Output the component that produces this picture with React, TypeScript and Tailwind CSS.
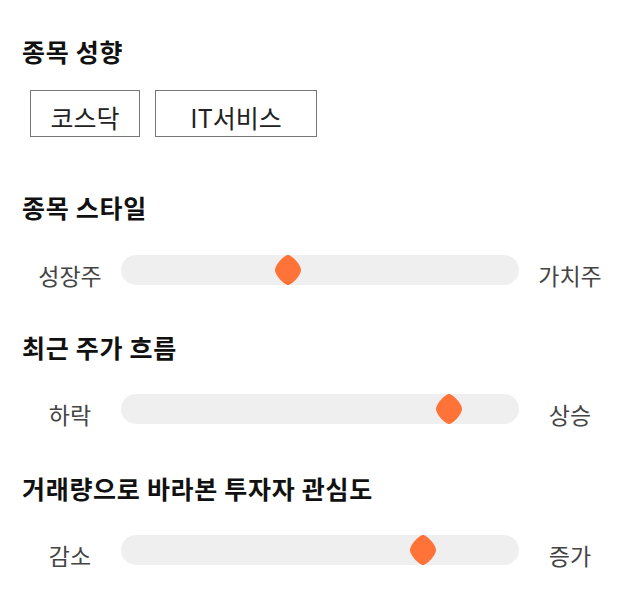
const FONT = "font-['Noto_Sans_CJK_KR','Noto_Sans',sans-serif]"

function Thumb({ pos }: { pos: number }) {
  return (
    <svg
      width="26"
      height="30"
      viewBox="0 0 26 30"
      className="absolute top-0"
      style={{ left: `calc(${pos * 100}% - 13px)` }}
    >
      <path d="M13 0C17 0 26 10 26 15C26 20 17 30 13 30C9 30 0 20 0 15C0 10 9 0 13 0Z" fill="#ff7339" />
    </svg>
  )
}

function SliderRow({ left, right, pos, className }: { left: string; right: string; pos: number; className: string }) {
  return (
    <div className={`flex items-center px-[30px] ${className}`}>
      <div className="w-[80px] translate-y-[5px] text-center text-[23px] leading-[30px] text-[#444]">{left}</div>
      <div className="relative mx-[11px] h-[30px] flex-1 rounded-full bg-[#efefef]">
        <Thumb pos={pos} />
      </div>
      <div className="w-[80px] translate-y-[5px] text-center text-[23px] leading-[30px] text-[#444]">{right}</div>
    </div>
  )
}

function Heading({ children, className }: { children: React.ReactNode; className: string }) {
  return (
    <h2 className={`pl-[22px] text-[25px] font-bold leading-[32px] tracking-[0.7px] text-[#111] ${className}`}>
      {children}
    </h2>
  )
}

export default function App() {
  return (
    <div className={`w-[640px] h-[606px] bg-white overflow-hidden ${FONT}`}>
      <Heading className="pt-[35px]">종목 성향</Heading>
      <div className="mt-[23px] flex gap-[15px] pl-[30px]">
        <div className="flex h-[47px] w-[110px] items-center justify-center border border-[#777] pt-[9px] text-[25px] text-[#222]">
          코스닥
        </div>
        <div className="flex h-[47px] w-[162px] items-center justify-center border border-[#777] pt-[9px] text-[25px] text-[#222]">
          IT서비스
        </div>
      </div>

      <Heading className="mt-[54px]">종목 스타일</Heading>
      <SliderRow className="mt-[32px]" left="성장주" right="가치주" pos={0.42} />

      <Heading className="mt-[46px]">최근 주가 흐름</Heading>
      <SliderRow className="mt-[31px]" left="하락" right="상승" pos={0.825} />

      <Heading className="mt-[48px]">거래량으로 바라본 투자자 관심도</Heading>
      <SliderRow className="mt-[31px]" left="감소" right="증가" pos={0.76} />
    </div>
  )
}
